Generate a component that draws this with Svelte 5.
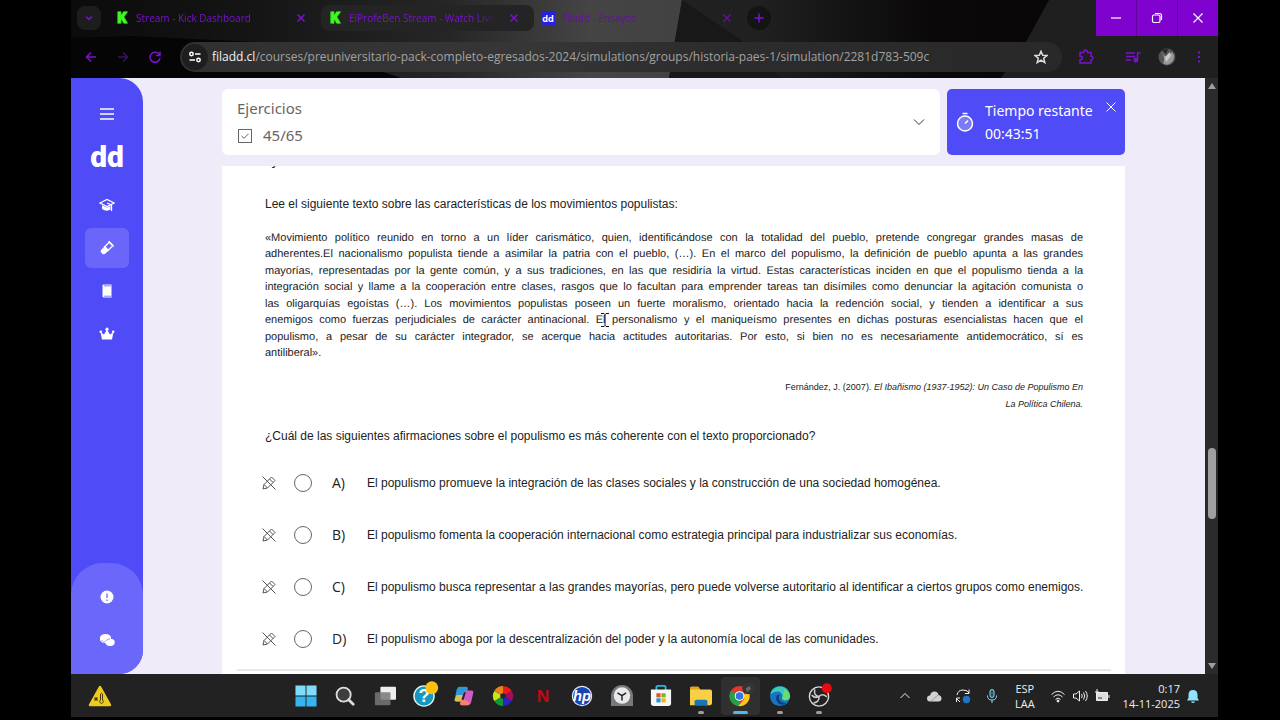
<script lang="ts">
    const tabs = [
        { title: "Stream - Kick Dashboard", icon: "kick" },
        { title: "ElProfeBen Stream - Watch Live", icon: "kick" },
        { title: "Filadd - Ensayos", icon: "filadd" },
    ];

    const quote = [
        "«Movimiento político reunido en torno a un líder carismático, quien, identificándose con la totalidad del pueblo, pretende congregar grandes masas de",
        "adherentes.El nacionalismo populista tiende a asimilar la patria con el pueblo, (…). En el marco del populismo, la definición de pueblo apunta a las grandes",
        "mayorías, representadas por la gente común, y a sus tradiciones, en las que residiría la virtud. Estas características inciden en que el populismo tienda a la",
        "integración social y llame a la cooperación entre clases, rasgos que lo facultan para emprender tareas tan disímiles como denunciar la agitación comunista o",
        "las oligarquías egoístas (…). Los movimientos populistas poseen un fuerte moralismo, orientado hacia la redención social, y tienden a identificar a sus",
        "enemigos como fuerzas perjudiciales de carácter antinacional. El personalismo y el maniqueísmo presentes en dichas posturas esencialistas hacen que el",
        "populismo, a pesar de su carácter integrador, se acerque hacia actitudes autoritarias. Por esto, si bien no es necesariamente antidemocrático, sí es",
        "antiliberal».",
    ];

    const options = [
        {
            letter: "A",
            text: "El populismo promueve la integración de las clases sociales y la construcción de una sociedad homogénea.",
        },
        {
            letter: "B",
            text: "El populismo fomenta la cooperación internacional como estrategia principal para industrializar sus economías.",
        },
        {
            letter: "C",
            text: "El populismo busca representar a las grandes mayorías, pero puede volverse autoritario al identificar a ciertos grupos como enemigos.",
        },
        {
            letter: "D",
            text: "El populismo aboga por la descentralización del poder y la autonomía local de las comunidades.",
        },
    ];

    const nav = ["Cursos", "Ensayos", "Apuntes", "Premium"];

    const apps = [
        { name: "Inicio" },
        { name: "Buscar" },
        { name: "Vista de tareas" },
        { name: "Ayuda" },
        { name: "Copilot" },
        { name: "Colores" },
        { name: "Netflix" },
        { name: "HP" },
        { name: "Reloj" },
        { name: "Store" },
        { name: "Explorador", open: true },
        { name: "Chrome", open: true, active: true },
        { name: "Edge", open: true },
        { name: "OBS", open: true },
    ];

    let answer = $state("");
    let current_tab = $state(2);
    let current_nav = $state(1);
</script>

<div class="desktop">
    <header class="browser">
        <svg class="theme" viewBox="0 0 1147 78" preserveAspectRatio="none" aria-hidden="true">
            <defs>
                <linearGradient id="left">
                    <stop offset="0" stop-color="#0b0b0b" />
                    <stop offset="0.3" stop-color="#151515" />
                    <stop offset="0.62" stop-color="#262626" />
                    <stop offset="0.85" stop-color="#454545" />
                    <stop offset="1" stop-color="#424242" />
                </linearGradient>
                <linearGradient id="middle">
                    <stop offset="0" stop-color="#272727" />
                    <stop offset="0.6" stop-color="#202020" />
                    <stop offset="0.75" stop-color="#0a0809" />
                    <stop offset="1" stop-color="#050304" />
                </linearGradient>
            </defs>
            <rect width="1147" height="78" fill="url(#middle)" />
            <path d="M0 0H611L604 40L598 78H0Z" fill="url(#left)" />
            <path d="M0 38L60 36L230 44L330 78H0Z" fill="#050505" />
            <path d="M611 0L670 40L710 78H598L604 40Z" fill="#181818" />
            <path d="M978 0H1147V78H930L956 40Z" fill="#1f1f1f" />
        </svg>
        <div class="tabs">
            <button class="tab-search" aria-label="Buscar pestañas">
                <svg viewBox="0 0 12 12"><path d="M3 4.5 6 7.5 9 4.5" /></svg>
            </button>
            {#each tabs as tab, i (tab.title)}
                <div class="tab" class:shaded={i == 1} class:current={i == current_tab}>
                    <span class="favicon {tab.icon}">{tab.icon == "kick" ? "K" : "dd"}</span>
                    <button class="tab-title" onclick={() => (current_tab = i)}>{tab.title}</button>
                    <button class="tab-close" aria-label="Cerrar pestaña">
                        <svg viewBox="0 0 12 12"><path d="M2.500 2.500 9.500 9.500M9.500 2.500 2.500 9.500" /></svg>
                    </button>
                </div>
            {/each}
            <button class="tab-new" aria-label="Nueva pestaña">
                <svg viewBox="0 0 12 12"><path d="M6 1.500V10.500M1.500 6H10.500" /></svg>
            </button>
            <div class="window-buttons">
                <button aria-label="Minimizar"><svg viewBox="0 0 12 12"><path d="M1 6H11" /></svg></button>
                <button aria-label="Restaurar">
                    <svg viewBox="0 0 12 12">
                        <rect x="1.500" y="3" width="7.500" height="7.500" rx="1.500" />
                        <path d="M4 1.500H8.500Q10.500 1.500 10.500 3.500V8" />
                    </svg>
                </button>
                <button aria-label="Cerrar"><svg viewBox="0 0 12 12"><path d="M1.500 1.500 10.500 10.500M10.500 1.500 1.500 10.500" /></svg></button>
            </div>
        </div>
        <div class="toolbar">
            <button aria-label="Atrás"><svg viewBox="0 0 14 14"><path d="M12 7H2.500M7 2.500 2.500 7 7 11.500" /></svg></button>
            <button class="dim" aria-label="Adelante"><svg viewBox="0 0 14 14"><path d="M2 7H11.500M7 2.500 11.500 7 7 11.500" /></svg></button>
            <button aria-label="Recargar">
                <svg viewBox="0 0 14 14"><path d="M11.500 5A5 5 0 1 0 12 8M12 1.500V5.500H8" /></svg>
            </button>
            <div class="address">
                <button class="site-info" aria-label="Información del sitio">
                    <svg viewBox="0 0 14 14">
                        <circle cx="3.500" cy="4" r="1.700" /><path d="M7 4H12.500M1.500 10H7" /><circle cx="10.500" cy="10" r="1.700" />
                    </svg>
                </button>
                <a href="#top"><b>filadd.cl</b>/courses/preuniversitario-pack-completo-egresados-2024/simulations/groups/historia-paes-1/simulation/2281d783-509c</a>
                <button class="star" aria-label="Favorito">
                    <svg viewBox="0 0 14 14"><path d="M7 1.200 8.700 5.200 13 5.500 9.700 8.300 10.800 12.600 7 10.200 3.200 12.600 4.300 8.300 1 5.500 5.300 5.200Z" /></svg>
                </button>
            </div>
            <button class="ext" aria-label="Extensiones">
                <svg viewBox="0 0 16 16"><path d="M2 3.500H5.500Q6 1 7.500 1T9.500 3.500H13V7.200Q15 7.500 15 9T13 10.800V14H2V10.800Q4.500 10.500 4.500 9T2 7.200Z" /></svg>
            </button>
            <button class="media" aria-label="Multimedia">
                <svg viewBox="0 0 16 16"><path d="M1 4H10M1 7.500H10M1 11H6M12.500 11V4H15.500" /><circle cx="10.800" cy="11.200" r="1.700" fill="currentColor" /></svg>
            </button>
            <button class="profile" aria-label="Perfil">
                <svg viewBox="0 0 18 18">
                    <circle cx="9" cy="9" r="8.500" fill="#555" />
                    <path d="M3 4Q8 9 5 15Q9 19 14 14Q18 9 14 4L9 10Z" fill="#999" />
                    <path d="M7 9 12 4 13 8 8 14Z" fill="#ccc" />
                    <path d="M4 2 10 1 8 6Z" fill="#222" />
                </svg>
            </button>
            <button class="more" aria-label="Menú">
                <svg viewBox="0 0 14 14"><path d="M7 1.500V3.500M7 6V8M7 10.500V12.500" /></svg>
            </button>
        </div>
    </header>

    <div class="page">
        <aside class="sidebar">
            <button class="burger" aria-label="Menú"><svg viewBox="0 0 14 12"><path d="M0 1H14M0 6H14M0 11H14" /></svg></button>
            <a class="logo" href="#inicio">dd</a>
            <nav>
                {#each nav as item, i (item)}
                    <button aria-label={item} class:selected={i == current_nav} onclick={() => (current_nav = i)}>
                        <svg viewBox="0 0 16 16">
                            {#if i == 0}
                                <path d="M1 6 8 2.500 15 6 8 9.500Z" fill="none" stroke="#fff" stroke-width="1.300" />
                                <path d="M3 8.200 8 10.500 11.500 9V12.500Q7.500 15 3 12Z" />
                                <path d="M8 6 12.500 8V14" fill="none" stroke="#fff" stroke-width="1.300" />
                            {:else if i == 1}
                                <path d="M2 10 6 6 10 10 6.500 13.500Q4.500 15 2.700 13.300T2 10Z" />
                                <path d="M5 7.500 10.500 2 14 5.500 8.500 11M9.500 1.500 14.500 6.500" fill="none" stroke="#fff" stroke-width="1.300" />
                            {:else if i == 2}
                                <path d="M3.500 2.500Q3.500 1.500 5 1.500H12.500V14.500H5Q3.500 14.500 3.500 13Z" />
                                <path d="M5 2.800H12M5 13.200H12" stroke="#4f4bf7" stroke-width="0.700" />
                            {:else}
                                <path d="M3 13.500 1.500 6 5 8.500 8 3.500 11 8.500 14.500 6 13 13.500Z" />
                                <circle cx="1.800" cy="5.800" r="1.300" /><circle cx="8" cy="3.200" r="1.600" /><circle cx="14.200" cy="5.800" r="1.300" />
                            {/if}
                        </svg>
                    </button>
                {/each}
            </nav>
            <div class="side-foot">
                <button aria-label="Avisos">
                    <svg viewBox="0 0 16 16"><circle cx="8" cy="8" r="6.500" /><path d="M8 4.500V9M8 10.500V12" stroke="#6b67fb" stroke-width="1.300" /></svg>
                </button>
                <button aria-label="Monedas">
                    <svg viewBox="0 0 16 16">
                        <ellipse cx="6.500" cy="5.500" rx="5.500" ry="3.500" /><path d="M1 5.500V8.500Q3 11.500 7 11L12 8V5.500Z" />
                        <ellipse cx="11" cy="9.500" rx="4.500" ry="2.800" /><path d="M6.500 9.500V11.500Q8 14.500 11.500 14T15.500 11.500V9.500Z" />
                        <path d="M3 8V9.500M5 9V10.500M6.500 9.200Q8 7 11 6.800" fill="none" stroke="#6b67fb" stroke-width="0.700" />
                    </svg>
                </button>
            </div>
        </aside>

        <main>
            <div class="top">
                <section class="progress">
                    <div>
                        <p>Ejercicios</p>
                        <p class="count">
                            <svg viewBox="0 0 16 16" aria-hidden="true"><rect x="1.500" y="1.500" width="13" height="13" /><path d="M4.500 8 7 10.300 11.500 5.800" /></svg>
                            45/65
                        </p>
                    </div>
                    <button aria-label="Desplegar"><svg viewBox="0 0 12 12"><path d="M1 3.500 6 8.500 11 3.500" /></svg></button>
                </section>
                <section class="timer">
                    <svg class="watch" viewBox="0 0 18 20" aria-hidden="true">
                        <circle cx="9" cy="11.500" r="7.500" fill="#7d7afa" />
                        <path d="M6.500 1.500H11.500M9 11.500 12 8.500" />
                    </svg>
                    <div>
                        <p>Tiempo restante</p>
                        <p>00:43:51</p>
                    </div>
                    <button aria-label="Ocultar"><svg viewBox="0 0 12 12"><path d="M1.500 1.500 10.500 10.500M10.500 1.500 1.500 10.500" /></svg></button>
                </section>
            </div>

            <article>
                <h2>Ejercicio</h2>
                <p class="lead">Lee el siguiente texto sobre las características de los movimientos populistas:</p>
                <p class="quote">
                    {#each quote as line, i}
                        <span class="line">{line}</span>
                        {#if i == 5}
                            <svg class="pointer" viewBox="0 0 10 16" aria-hidden="true">
                                <path d="M1 1.500H4L5 2.500 6 1.500H9M1 14.500H4L5 13.500 6 14.500H9M5 2.500V13.500" />
                            </svg>
                        {/if}
                    {/each}
                </p>
                <p class="source">
                    Fernández, J. (2007). <i>El Ibañismo (1937-1952): Un Caso de Populismo En<br />La Política Chilena.</i>
                </p>
                <p class="question">¿Cuál de las siguientes afirmaciones sobre el populismo es más coherente con el texto proporcionado?</p>
                <div class="options">
                    {#each options as option (option.letter)}
                        <div class="option">
                            <button aria-label="Descartar {option.letter}">
                                <svg viewBox="0 0 16 16">
                                    <path d="M2 14 3 9.500 10.500 2 14 5.500 6.500 13ZM8.500 4 12 7.500M3 9.500 6.500 13M1.500 1.500 14.500 14.500" />
                                </svg>
                            </button>
                            <input type="radio" id="option-{option.letter}" name="answer" value={option.letter} bind:group={answer} />
                            <label for="option-{option.letter}">
                                <span>{option.letter})</span>
                                {option.text}
                            </label>
                        </div>
                    {/each}
                </div>
                <hr />
            </article>
        </main>

        <div class="scrollbar" aria-hidden="true">
            <svg viewBox="0 0 10 8"><path d="M5 1 9 7H1Z" /></svg>
            <div class="track"><div class="thumb"></div></div>
            <svg viewBox="0 0 10 8"><path d="M1 1H9L5 7Z" /></svg>
        </div>
    </div>

    <footer class="taskbar">
        <button class="weather" aria-label="El tiempo">
            <svg viewBox="0 0 24 24">
                <path d="M12 3 22 21H2Z" fill="#efcb1f" stroke="#efcb1f" stroke-width="2.500" stroke-linejoin="round" />
                <path d="M6 15H10M8 13V17M6.500 13.500 9.500 16.500M9.500 13.500 6.500 16.500" stroke="#4a3c05" />
                <path d="M12.500 16V10Q13.500 8.500 14.500 10V16A1.800 1.800 0 1 1 12.500 16Z" fill="none" stroke="#4a3c05" />
            </svg>
        </button>
        <div class="apps">
            {#each apps as app, i (app.name)}
                <button class="app" class:open={app.open} class:active={app.active} aria-label={app.name}>
                    <svg viewBox="0 0 24 24">
                        {#if i == 0}
                            <path d="M0.500 0.500H11.500V11.500H0.500ZM12.500 0.500H23.500V11.500H12.500Z" fill="#7fdcfb" />
                            <path d="M0.500 12.500H11.500V23.500H0.500ZM12.500 12.500H23.500V23.500H12.500Z" fill="#35b4f2" />
                        {:else if i == 1}
                            <circle cx="10.500" cy="10.500" r="7.700" fill="#3d3d3d" stroke="#ddd" stroke-width="2" />
                            <path d="M16 16 21 21" stroke="#ddd" stroke-width="3" stroke-linecap="round" />
                        {:else if i == 2}
                            <rect x="7" y="2" width="17" height="14" rx="1" fill="#eee" />
                            <rect x="1" y="8" width="17" height="14" rx="1" fill="#777" opacity="0.850" />
                        {:else if i == 3}
                            <circle cx="12" cy="12" r="11" fill="#1697bf" stroke="#e9f7fb" stroke-width="1.500" />
                            <text x="12" y="19" font-size="20" font-weight="700" fill="#fff" text-anchor="middle">?</text>
                            <circle cx="20.500" cy="3" r="7" fill="#fcc00d" />
                        {:else if i == 4}
                            <path d="M7 2H14Q17 2 16 5L13 16Q12 18 9 18H4Q1 18 2 15L4 5Q5 2 7 2Z" fill="#2b9bd4" />
                            <path d="M4 11 2 15Q1 18 4 18H9L11 11Z" fill="#d3c54b" />
                            <path d="M15 6H20Q23 6 22 9L20 18Q19 22 16 22H10Q7 22 8 19L11 9Q12 6 15 6Z" fill="#d25ac7" />
                            <path d="M10 14 8 19Q7 22 10 22H16Q18 22 19 20Z" fill="#f4826c" />
                            <path d="M13 8 10.500 16" stroke="#222" stroke-width="2" />
                        {:else if i == 5}
                            <path d="M12 12 12 1A11 11 0 0 1 21.500 6.500Z" fill="#f01818" />
                            <path d="M12 12 21.500 6.500A11 11 0 0 1 21.500 17.500Z" fill="#a00d60" />
                            <path d="M12 12 21.500 17.500A11 11 0 0 1 12 23Z" fill="#2b22c9" />
                            <path d="M12 12 12 23A11 11 0 0 1 2.500 17.500Z" fill="#0c9a35" />
                            <path d="M12 12 2.500 17.500A11 11 0 0 1 2.500 6.500Z" fill="#c9e51c" />
                            <path d="M12 12 2.500 6.500A11 11 0 0 1 12 1Z" fill="#e8861b" />
                            <circle cx="12" cy="12" r="3" fill="#30202c" />
                        {:else if i == 6}
                            <text x="12" y="19" font-size="19" font-weight="900" fill="#c10a17" text-anchor="middle">N</text>
                        {:else if i == 7}
                            <circle cx="12" cy="12" r="10.500" fill="#1743b5" stroke="#e6ecfa" stroke-width="1.300" />
                            <text x="12" y="17" font-size="16" font-style="italic" font-weight="700" fill="#fff" text-anchor="middle">hp</text>
                        {:else if i == 8}
                            <path d="M0 23V12A12 12 0 0 1 24 12V23Z" fill="#77797b" />
                            <circle cx="12" cy="11.500" r="9" fill="#e7e9ea" />
                            <path d="M7 8.500 12 11.500 16.500 8.500M12 11.500V17" fill="none" stroke="#222" stroke-width="1.600" />
                        {:else if i == 9}
                            <path d="M7 6V2.500Q7 1 9 1H15Q17 1 17 2.500V6" fill="none" stroke="#2fb4e0" stroke-width="2" />
                            <path d="M1 5H23V20Q23 23 20 23H4Q1 23 1 20Z" fill="#f6f6f6" />
                            <rect x="7" y="9" width="4.500" height="4.500" fill="#e8501f" /><rect x="12.500" y="9" width="4.500" height="4.500" fill="#7bb51c" />
                            <rect x="7" y="14.500" width="4.500" height="4.500" fill="#1b98dd" /><rect x="12.500" y="14.500" width="4.500" height="4.500" fill="#f3b315" />
                        {:else if i == 10}
                            <path d="M0 3.500Q0 2 2 2H9L11 5H22Q24 5 24 7V20Q24 22 22 22H0Z" fill="#f9cf46" />
                            <path d="M0 3.500Q0 2 2 2H9L11 5H0Z" fill="#e5a21a" />
                            <path d="M5 22V18Q5 16 7 16H17Q19 16 19 18V22Z" fill="#1976b5" />
                        {:else if i == 11}
                            <circle cx="11.500" cy="12" r="11" fill="#e2372b" />
                            <path d="M11.500 12 2 6.500A11 11 0 0 0 11.500 23Z" fill="#24a048" />
                            <path d="M11.500 12 22 8.500A11 11 0 0 1 10 23L17 15Z" fill="#fbc819" />
                            <circle cx="11.500" cy="12" r="5.300" fill="#fff" /><circle cx="11.500" cy="12" r="4.200" fill="#2f78e4" />
                            <circle cx="21" cy="3.500" r="6.500" fill="#353535" /><path d="M18 4 22 1 24 4 20 8Z" fill="#666" />
                        {:else if i == 12}
                            <circle cx="12" cy="12" r="11" fill="#1675c0" />
                            <path d="M2 8A11 11 0 0 1 23 12Q23 17 17 17 13 16 15 12 14 7 9 7 5 7 2 10Z" fill="#3bc9b9" />
                            <path d="M17 4Q24 9 22.800 14 20 18 15.500 16 13.500 15 15 12Z" fill="#66dc71" />
                            <path d="M9 11Q6 15 10 20 14 23 19 20 14 20 12 17 9.500 14 12 10.500Z" fill="#0b3f83" />
                        {:else}
                            <circle cx="12" cy="12.500" r="10.500" fill="#222" stroke="#ddd" stroke-width="1.500" />
                            <path d="M7.500 5Q5.500 11 12 12.500M12 12.500Q16 8.500 20.500 13M12 12.500Q12.500 19 6 19.500M4 11Q8 15 12 12.500" fill="none" stroke="#ccc" stroke-width="1.700" />
                            <circle cx="20.500" cy="3.500" r="5.500" fill="#e90b12" />
                        {/if}
                    </svg>
                </button>
            {/each}
        </div>
        <div class="tray">
            <button aria-label="Iconos ocultos"><svg viewBox="0 0 16 16"><path d="M3.500 10 8 5.500 12.500 10" /></svg></button>
            <button aria-label="OneDrive">
                <svg viewBox="0 0 16 16"><path d="M4 13.500Q1 13.500 1 10.500T4 7.500Q5 3.500 8.500 3.500T12.500 7Q15.500 7.500 15.500 10.500T12.500 13.500Z" fill="#d2d2d2" stroke="none" /><path d="M5 13 12 7" stroke="#999" /></svg>
            </button>
            <button aria-label="Actualización">
                <svg viewBox="0 0 16 16"><path d="M2 7Q3 2 8 2T14 5M14 1.500V5.500H10M1.500 14V10H5M2 11 5 14" /><circle cx="11.500" cy="11.500" r="3.700" fill="#1c76c8" stroke="none" /></svg>
            </button>
            <button aria-label="Micrófono">
                <svg viewBox="0 0 16 16"><rect x="6" y="1.500" width="4" height="8" rx="2" fill="#20566a" stroke="#8fdcf0" /><path d="M3.500 7.500Q3.500 12 8 12T12.500 7.500M8 12V15" stroke="#8fdcf0" /></svg>
            </button>
            <button class="lang">ESP<br />LAA</button>
            <button class="status" aria-label="Red, volumen y batería">
                <svg viewBox="0 0 16 16"><path d="M1.500 6.500Q8 0 14.500 6.500M3.500 9Q8 4.500 12.500 9M5.500 11.300Q8 9 10.500 11.300" /><circle cx="8" cy="13" r="1" fill="#eee" /></svg>
                <svg viewBox="0 0 16 16"><path d="M1.500 6H4L7.500 3V13L4 10H1.500ZM9.500 6Q11 8 9.500 10M11.500 4.500Q14 8 11.500 11.500M13.500 3Q17 8 13.500 13" /></svg>
                <svg viewBox="0 0 16 16"><path d="M2.500 4.500H13.500V12.500H2.500ZM15 7V10" fill="#ddd" /><path d="M3 1V7M1 4H5" /><path d="M4 10H8" stroke="#333" /></svg>
            </button>
            <button class="clock">0:17<br />14-11-2025</button>
            <button aria-label="Notificaciones">
                <svg viewBox="0 0 16 16"><path d="M2 12.500 3.500 10V7Q3.500 2 8 2T12.500 7V10L14 12.500ZM6 13.500H10Q9.500 15 8 15T6 13.500Z" fill="#8fe3fa" stroke="none" /></svg>
            </button>
        </div>
    </footer>
</div>

<style>
    :global(body) {
        margin: 0;
        background: #000;
    }

    .desktop {
        box-sizing: border-box;
        display: flex;
        flex-direction: column;
        height: 100vh;
        padding: 0 62px 3px 71px;
        font-family: "Open Sans", sans-serif;
    }

    p,
    h2 {
        margin: 0;
    }

    button {
        display: flex;
        align-items: center;
        justify-content: center;
        padding: 0;
        border: 0;
        background: none;
        color: inherit;
        font: inherit;
    }

    svg {
        display: block;
        flex: none;
    }

    /* browser */
    .browser {
        position: relative;
        flex: none;
        height: 78px;
        color: #7a12cf;
    }

    .browser svg {
        fill: none;
        stroke: currentColor;
        stroke-width: 1.5;
    }

    .browser .theme {
        position: absolute;
        width: 100%;
        height: 100%;
        stroke: none;
    }

    .tabs,
    .toolbar {
        position: relative;
        display: flex;
        align-items: center;
    }

    .tabs {
        height: 36px;
        padding-left: 6px;
        font-size: 10px;
    }

    .tabs svg {
        width: 12px;
        height: 12px;
    }

    .tab-search {
        width: 24px;
        height: 24px;
        margin-right: 7px;
        border-radius: 8px;
        background: #1d1d1d;
    }

    .tab {
        box-sizing: border-box;
        display: flex;
        align-items: center;
        flex: 0 1 213px;
        min-width: 0;
        height: 26px;
        padding: 0 14px 0 7px;
        border-radius: 8px;
    }

    .tab.shaded {
        background: #242424;
    }

    .tab.current {
        color: #651099;
    }

    .favicon {
        flex: none;
        width: 14px;
        margin-right: 7px;
        color: #3dfa1e;
        font: 900 15px/15px "Roboto", sans-serif;
        text-align: center;
        -webkit-text-stroke: 1px #3dfa1e;
    }

    .favicon.filadd {
        background: #2620e0;
        color: #fff;
        font: 700 9px/15px "Inter", sans-serif;
        -webkit-text-stroke: 0;
    }

    .tab-title {
        flex: 1;
        justify-content: flex-start;
        min-width: 0;
        overflow: hidden;
        white-space: nowrap;
        mask-image: linear-gradient(90deg, #000 88%, transparent);
    }

    .tab-close {
        margin-left: 12px;
    }

    .tab-new {
        width: 24px;
        height: 24px;
        border-radius: 12px;
        background: #141414;
    }

    .window-buttons {
        display: flex;
        align-self: stretch;
        gap: 1px;
        margin-left: auto;
        background: #5f04a0;
    }

    .window-buttons button {
        width: 40px;
        background: #7f02cf;
        color: #fff;
    }

    .window-buttons svg {
        stroke-width: 1.2;
    }

    .toolbar {
        height: 41px;
        padding: 0 12px 0 13px;
    }

    .toolbar > button {
        width: 14px;
        margin-right: 18px;
    }

    .toolbar svg {
        width: 14px;
        height: 14px;
    }

    .toolbar > .dim {
        color: #3a1263;
    }

    .address {
        display: flex;
        align-items: center;
        flex: 1;
        min-width: 0;
        height: 30px;
        padding: 0 14px 0 2px;
        border-radius: 15px;
        background: linear-gradient(90deg, #303030, #363636 40%, #2c2c2c 60%, #292929);
        color: #a2a2a2;
        font-size: 12px;
    }

    .address a {
        flex: 1;
        min-width: 0;
        overflow: hidden;
        color: inherit;
        text-decoration: none;
        white-space: nowrap;
    }

    .address b {
        color: #f2f2f2;
        font-weight: 400;
    }

    .site-info {
        width: 26px;
        height: 26px;
        margin-right: 4px;
        border-radius: 13px;
        background: #1e1e1e;
        color: #fff;
    }

    .star {
        color: #ddd;
    }

    .toolbar > .ext {
        margin: 0 33px 0 17px;
    }

    .toolbar > .media {
        margin-right: 20px;
    }

    .toolbar .ext svg,
    .toolbar .media svg {
        width: 16px;
        height: 16px;
    }

    .toolbar > .profile svg {
        width: 18px;
        height: 18px;
        stroke: none;
    }

    .toolbar > .more {
        margin-right: 0;
    }

    .toolbar .more svg {
        stroke-width: 2;
    }

    /* page */
    .page {
        display: flex;
        flex: 1;
        min-height: 0;
        background: #efebf8;
    }

    .sidebar {
        display: flex;
        flex: none;
        flex-direction: column;
        align-items: center;
        width: 72px;
        border-radius: 0 24px 24px 0;
        background: #4f4bf7;
        color: #fff;
        overflow: hidden;
    }

    .sidebar svg {
        width: 16px;
        height: 16px;
        fill: #fff;
    }

    .sidebar .burger {
        margin-top: 28px;
    }

    .sidebar .burger svg {
        width: 14px;
        stroke: #fff;
        stroke-width: 1.3;
    }

    .logo {
        margin: 15px 0 8px;
        color: #fff;
        font: 900 30px/40px "Roboto", sans-serif;
        text-decoration: none;
    }

    nav {
        display: grid;
        gap: 3px;
    }

    nav button,
    .side-foot button {
        width: 44px;
        height: 40px;
        border-radius: 6px;
    }

    nav .selected {
        background: #6966f9;
    }

    .side-foot {
        box-sizing: border-box;
        display: grid;
        align-content: start;
        justify-items: center;
        gap: 3px;
        width: 100%;
        height: 111px;
        margin-top: auto;
        padding-top: 14px;
        border-radius: 32px 32px 0 0;
        background: #6b67fb;
    }

    main {
        display: flex;
        flex: 1;
        flex-direction: column;
        min-width: 0;
        padding: 11px 80px 0 79px;
    }

    .top {
        display: flex;
        flex: none;
        gap: 7px;
        height: 66px;
        margin-bottom: 11px;
        font: 15px/23px "Noto Sans", sans-serif;
    }

    .top svg {
        fill: none;
        stroke: currentColor;
    }

    .progress {
        box-sizing: border-box;
        display: flex;
        flex: 1;
        align-items: center;
        justify-content: space-between;
        padding: 0 15px;
        border-radius: 6px;
        background: #fff;
        color: #666;
    }

    .progress p {
        line-height: 27px;
    }

    .progress .count {
        display: flex;
        align-items: center;
        gap: 10px;
    }

    .progress .count svg {
        width: 16px;
        height: 16px;
    }

    .progress button {
        color: #333;
    }

    .progress button svg,
    .timer button svg {
        width: 12px;
        height: 12px;
    }

    .timer {
        box-sizing: border-box;
        display: flex;
        align-items: center;
        width: 178px;
        padding: 0 8px 0 9px;
        border-radius: 5px;
        background: #4f4bf7;
        color: #fff;
        font-size: 14px;
    }

    .timer .watch {
        width: 18px;
        height: 20px;
        margin-right: 11px;
        stroke-width: 1.5;
    }

    .timer button {
        align-self: flex-start;
        margin: 12px 0 0 auto;
    }

    article {
        flex: 1;
        min-height: 0;
        padding: 0 42px 0 43px;
        background: #fff;
        color: #222;
        font: 12px/1.375 "Liberation Sans", sans-serif;
        overflow: hidden;
    }

    /* scrolled almost out of view */
    h2 {
        height: 4px;
        margin-top: -9px;
        font: 14px/4px "Noto Sans", sans-serif;
    }

    .lead {
        margin-top: 35px;
    }

    .quote {
        position: relative;
        margin-top: 17px;
        font-size: 11px;
        line-height: 1.5;
        text-rendering: geometricPrecision;
    }

    .line {
        display: block;
        text-align-last: justify;
        white-space: nowrap;
    }

    .line:last-child {
        text-align-last: left;
    }

    .pointer {
        position: absolute;
        top: 82px;
        left: 41%;
        width: 10px;
        height: 16px;
        fill: none;
        stroke: #111;
    }

    .source {
        margin-top: 17px;
        font-size: 9px;
        line-height: 17px;
        text-align: right;
    }

    .question {
        margin-top: 15px;
    }

    .options {
        margin-top: 13px;
    }

    .option {
        display: flex;
        align-items: center;
        height: 52px;
    }

    .option button {
        width: 16px;
        margin: 0 17px 0 -4px;
    }

    .option svg {
        width: 16px;
        height: 16px;
        fill: none;
        stroke: #555;
    }

    .option input {
        appearance: none;
        box-sizing: border-box;
        flex: none;
        width: 18px;
        height: 18px;
        margin: 0 20px 0 0;
        border: 1px solid #666;
        border-radius: 9px;
    }

    .option input:checked {
        border: 5px solid #4f4bf7;
    }

    .option label {
        display: flex;
        align-items: center;
        white-space: nowrap;
    }

    .option span {
        width: 35px;
        font: 14px/20px "Open Sans", sans-serif;
    }

    hr {
        height: 2px;
        margin: 4px -28px 0;
        border: 0;
        background: #e8e8e8;
    }

    .scrollbar {
        display: flex;
        flex: none;
        flex-direction: column;
        align-items: center;
        box-sizing: border-box;
        width: 13px;
        padding: 4px 0;
        background: #2b2b2b;
    }

    .scrollbar svg {
        width: 10px;
        height: 8px;
        fill: #9f9f9f;
    }

    .track {
        flex: 1;
        padding-top: 358px;
    }

    .thumb {
        width: 8px;
        height: 71px;
        border-radius: 4px;
        background: #9f9f9f;
    }

    /* taskbar */
    .taskbar {
        display: flex;
        flex: none;
        align-items: center;
        height: 43px;
        background: #222;
        color: #eee;
        font-size: 11px;
        line-height: 15px;
    }

    .weather {
        width: 58px;
    }

    .weather svg {
        width: 24px;
        height: 24px;
    }

    .apps {
        display: grid;
        grid-template-columns: repeat(14, 1fr);
        width: 553px;
        margin-left: 157px;
        font-family: "Liberation Sans", sans-serif;
    }

    .app {
        position: relative;
        height: 38px;
        border-radius: 4px;
    }

    .app svg {
        width: 22px;
        height: 22px;
        overflow: visible;
    }

    .app.active {
        background: #303030;
    }

    .app.open::after {
        position: absolute;
        bottom: 1px;
        width: 6px;
        height: 3px;
        border-radius: 2px;
        background: #a59b97;
        content: "";
    }

    .app.active::after {
        width: 15px;
        background: #55b7e8;
    }

    .tray {
        display: flex;
        align-items: center;
        gap: 13px;
        margin-left: auto;
        padding-right: 17px;
    }

    .tray svg {
        width: 16px;
        height: 16px;
        fill: none;
        stroke: #eee;
    }

    .lang {
        margin: 0 2px;
    }

    .status {
        gap: 6px;
    }

    .clock {
        text-align: right;
    }

    .tray .clock {
        margin-right: -8px;
    }
</style>
